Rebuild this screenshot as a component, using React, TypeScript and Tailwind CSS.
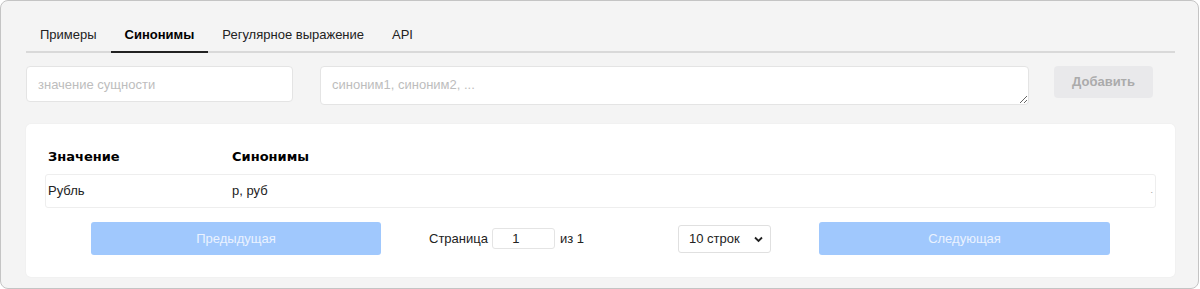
import React, { useState } from 'react';

const tabs = ['Примеры', 'Синонимы', 'Регулярное выражение', 'API'];

const rows = [{ value: 'Рубль', synonyms: 'р, руб' }];

export default function App() {
  const [active, setActive] = useState(1);

  return (
    <div className="h-[289px] w-[1200px] bg-white font-['Liberation_Sans',Arial,sans-serif] text-[13px] text-[#222]">
      <div className="box-border h-[289px] w-[1199px] rounded-[8px] border border-[#c4c4c4] bg-[#f4f4f4] pl-[25px] pr-[23px] pt-[16px]">
        {/* Tabs */}
        <div className="flex border-b-2 border-[#d9d9d9]">
          {tabs.map((tab, i) => (
            <button
              key={tab}
              onClick={() => setActive(i)}
              className={
                i === active
                  ? '-mb-[2px] border-b-2 border-[#222] px-[14px] pt-[10px] pb-[8px] leading-[16px] font-bold text-black'
                  : '-mb-[2px] border-b-2 border-transparent px-[14px] pt-[10px] pb-[8px] leading-[16px] text-[#222]'
              }
            >
              {tab}
            </button>
          ))}
        </div>

        {/* Add form */}
        <div className="mt-[13px] flex items-start">
          <input
            type="text"
            placeholder="значение сущности"
            className="box-border h-[36px] w-[267px] rounded-[4px] border border-[#e4e4e4] bg-white px-[11px] outline-none placeholder:text-[#bdbdbd]"
          />
          <textarea
            placeholder="синоним1, синоним2, ..."
            className="ml-[27px] box-border block h-[39px] w-[709px] rounded-[4px] border border-[#e4e4e4] bg-white px-[11px] py-[10px] leading-[16px] outline-none placeholder:text-[#bdbdbd]"
          />
          <button
            disabled
            className="ml-[25px] h-[32px] w-[99px] rounded-[4px] bg-[#e9e9eb] font-bold text-[#ababab]"
          >
            Добавить
          </button>
        </div>

        {/* Table card */}
        <div className="mt-[19px] rounded-[5px] bg-white px-[19px] pt-[16px] pb-[22px] shadow-[0_0_2px_rgba(0,0,0,0.06)]">
          <div className="flex h-[34px] items-center font-['DejaVu_Sans',Verdana,sans-serif] text-[13px] font-bold text-black">
            <div className="w-[187px] pl-[3px]">Значение</div>
            <div>Синонимы</div>
          </div>
          {rows.map((row) => (
            <div
              key={row.value}
              className="flex h-[34px] items-center rounded-[3px] border border-[#eeeeee] text-[#222]"
            >
              <div className="w-[186px] pl-[2px]">{row.value}</div>
              <div className="flex-1">{row.synonyms}</div>
              <div className="pr-[2px] text-[9px] text-[#999]">.</div>
            </div>
          ))}

          {/* Pagination */}
          <div className="mt-[14px] flex items-center pl-[46px]">
            <button
              disabled
              className="h-[33px] w-[290px] rounded-[3px] bg-[#a0c8fd] text-[#eaf2ff]"
            >
              Предыдущая
            </button>
            <span className="ml-[48px]">Страница</span>
            <input
              type="number"
              defaultValue={1}
              className="ml-[4px] box-border h-[21px] w-[63px] rounded-[3px] border border-[#e4e4e4] px-[2px] text-center outline-none [appearance:textfield]"
            />
            <span className="ml-[5px]">из 1</span>
            <div className="relative ml-[94px]">
              <select className="box-border h-[28px] w-[93px] appearance-none rounded-[3px] border border-[#e0e0e0] bg-white pl-[10px] text-[13px] text-[#222] outline-none">
                <option>10 строк</option>
                <option>20 строк</option>
                <option>50 строк</option>
              </select>
              <svg
                className="pointer-events-none absolute top-[11px] right-[8px]"
                width="9"
                height="7"
                viewBox="0 0 9 7"
              >
                <path d="M1 1.5 L4.5 5 L8 1.5" fill="none" stroke="#222" strokeWidth="1.8" />
              </svg>
            </div>
            <button
              disabled
              className="ml-[48px] h-[33px] w-[291px] rounded-[3px] bg-[#a0c8fd] text-[#eaf2ff]"
            >
              Следующая
            </button>
          </div>
        </div>
      </div>
    </div>
  );
}
